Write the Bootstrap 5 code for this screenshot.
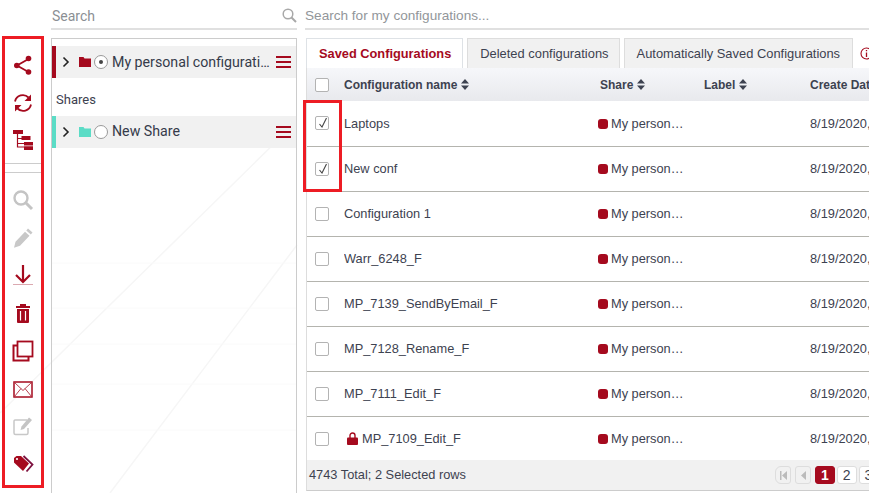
<!DOCTYPE html>
<html lang="en">
<head>
<meta charset="utf-8">
<title>Configurations</title>
<link href="https://cdn.jsdelivr.net/npm/bootstrap@5.3.0/dist/css/bootstrap.min.css" rel="stylesheet">
<style>
html,body{height:493px;overflow:hidden;background:#fff}
body{font-family:"Liberation Sans",Arial,sans-serif;font-size:12px;color:#3d4250}
.app-shell{position:relative;width:869px;height:493px;overflow:hidden;padding-left:2px}
.bg-deco{position:absolute;left:0;top:0;z-index:0;pointer-events:none}
.app-shell>*:not(.bg-deco){position:relative;z-index:1}
.app-shell>.annot-box{position:absolute;z-index:3}
.rail{width:42px;height:452px;margin-top:36px;border:3px solid #ed1c24;flex:none;padding-top:7px}
.rail-item{height:37.7px;display:flex;align-items:center;justify-content:center}
.rail-sep{height:10px;margin:4px 0 8px;border-top:1px solid #ccc;border-bottom:1px solid #ccc}
.side-col{width:246px;flex:none;margin-left:7px}
.search-line{height:30px;border-bottom:2px solid #e0e0e0;color:#8b8f94;font-family:Roboto,sans-serif;font-size:14px;line-height:32px}
.side-search{padding-left:1px}
.tree-panel{height:460px;margin-top:8px;border:1px solid #ccc;padding-top:7px;font-family:Roboto,sans-serif;font-size:14.2px}
.tree-node{height:32px;background:#f1f1f1;border-left:4px solid #a50a1e;padding-left:6px}
.tree-node.shared{border-left-color:#5bdcc6}
.folder-ic{margin-left:9px;flex:none}
.node-label{width:160px;margin-left:4px;line-height:31px;color:#353b4a;flex:none}
.shared .node-label{margin-bottom:2px}
.shares-title{height:38px;line-height:43px;padding-left:4px;font-size:13px;color:#3d4250}
.radio-dot{width:14px;height:14px;border:1px solid #9a9a9a;border-radius:50%;background:#fff;flex:none;margin-left:3px;display:flex;align-items:center;justify-content:center}
.radio-dot i{display:block;width:4px;height:4px;border-radius:50%;background:#444}
.burger{width:15px;margin-left:4px;flex:none}
.burger i{display:block;height:2.4px;background:#a50a1e;margin:2.4px 0}
.main-col{width:564px;flex:none;margin-left:8px;overflow:hidden}
.main-search{font-family:"Liberation Sans",sans-serif;font-size:13.6px;color:#92969a}
.tabs-row{margin-top:8px;height:30px;padding-left:1px;border:0;flex-wrap:nowrap;gap:4px;white-space:nowrap}
.tabs-row .nav-link{height:30px;padding:0 12px;line-height:29px;font-size:12.9px;color:#3d4250;background:#f1f1f1;border:1px solid #ddd;border-bottom:0;border-radius:0;margin:0}
.tabs-row .nav-link.active{background:#fff;color:#a50a1e;font-weight:700;font-size:12.8px;padding-right:11px}
.tabs-row .tab-short{padding-right:10px}
.info-mark{margin-left:3px;line-height:29px;align-self:center}
.grid-wrap{width:563px;height:392px;border-left:1px solid #ddd;overflow:hidden;margin-left:1px}
.conf-table{table-layout:fixed;width:660px;margin:0;font-size:12.8px;color:#3d4250}
.conf-table th,.conf-table td{padding:0;vertical-align:middle;white-space:nowrap;overflow:hidden;background:transparent;color:#3d4250;box-shadow:none}
.conf-table thead tr{height:33px;background:linear-gradient(#f6f7fa,#e8e9ed)}
.conf-table thead th{border:0;font-weight:700;font-size:12px}
.conf-table tbody tr{height:45px}
.conf-table tbody td{border-bottom:1px solid #b4b4ae}
.conf-table tbody tr:last-child td{border-bottom:0}
.conf-table .share-head{padding-left:2px}
.conf-table .cell-check{padding-left:8px}
.box-chk{display:block;width:14px;height:14px;border:1px solid #b3b3b3;border-radius:2px;background:#fff;position:relative}
.box-chk svg{position:absolute;left:1px;top:0}
.share-sq{display:inline-block;width:10px;height:10px;border-radius:3px;background:#a50a1e;margin-right:3px;vertical-align:-1px}
.sort-mark{margin-left:4px;vertical-align:-1px}
.lock-ic{margin-left:3px;margin-right:4px;vertical-align:-2px}
.grid-foot{height:31px;width:563px;margin-left:1px;background:#f1f1f1;border-left:1px solid #ddd;border-bottom:1px solid #ccc;padding-left:2px;font-size:12.8px;color:#3d4250;overflow:hidden}
.pager-list{margin:0 0 0 auto;padding:0;gap:3px;flex-wrap:nowrap;flex:none;width:94px}
.pager-list .page-item{flex:none}
.pager-list .page-link{height:18px;min-width:18px;padding:0 5px;line-height:17px;text-align:center;font-size:14px;color:#3d4250;border:1px solid #ddd;border-radius:3px;background:#fff;margin:0}
.pager-list .page-item.active .page-link{background:#a50a1e;border-color:#a50a1e;color:#fff;font-weight:700;min-width:19px}
.pager-list .page-item.disabled{margin-right:2px}
.pager-list .page-item.disabled .page-link{background:#f1f1f1;color:#bbb;display:flex;align-items:center;justify-content:center;padding:0;width:16px;min-width:16px}
.annot-box{border:3px solid #ed1c24;left:303px;top:100px;width:39px;height:92px}
</style>
</head>
<body>
<div class="app-shell d-flex align-items-start">
  <svg class="bg-deco" width="869" height="493" viewBox="0 0 869 493" aria-hidden="true">
    <g stroke="#f6f6f6" stroke-width="1.500" fill="none">
      <path d="M288 130 0 413M297 245 110 493"/>
    </g>
    <path d="M52 263H297M52 308H297M52 344H297M52 384H297M52 430H297" stroke="#fafafa" fill="none"/>
  </svg>

  <div class="rail">
    <div class="rail-item"><svg width="22" height="22" viewBox="0 0 22 22"><path d="M16.500 5 5 11.500 16.500 18" fill="none" stroke="#a50a1e" stroke-width="1.800"/><circle cx="16.500" cy="4.500" r="2.800" fill="#a50a1e"/><circle cx="4.800" cy="11.500" r="2.800" fill="#a50a1e"/><circle cx="16.500" cy="18" r="2.800" fill="#a50a1e"/></svg></div>
    <div class="rail-item"><svg width="22" height="22" viewBox="0 0 22 22"><path d="M3 9.500A8 8 0 0 1 16.500 5.500M19 12.500A8 8 0 0 1 5.500 16.500" fill="none" stroke="#a50a1e" stroke-width="1.800"/><path d="M19 2.500V9h-6.500zM3 19.500V13h6.500z" fill="#a50a1e"/></svg></div>
    <div class="rail-item"><svg width="22" height="22" viewBox="0 0 22 22"><path d="M5.500 4v14H12M5.500 9.500H10M5.500 14.500H12" fill="none" stroke="#a50a1e" stroke-width="1.200"/><path fill="#a50a1e" d="M1 1h10v4H1zM9.500 7h9v4h-9zM12 13h9v3.500h-9zM12 17.200h9V21h-9z"/></svg></div>
    <div class="rail-sep"></div>
    <div class="rail-item"><svg width="22" height="22" viewBox="0 0 22 22"><circle cx="9" cy="9" r="6.500" fill="none" stroke="#c4c4c4" stroke-width="2.400"/><path d="M13.500 13.500 20 20" stroke="#c4c4c4" stroke-width="3"/></svg></div>
    <div class="rail-item"><svg width="22" height="22" viewBox="0 0 22 22"><path fill="#c8c8c8" d="M16 1.500l4.500 4-1.700 2-4.500-4zM13 4.800l4.500 4-9.500 10-6 2 1.500-6z"/></svg></div>
    <div class="rail-item"><svg width="22" height="22" viewBox="0 0 22 22"><path d="M11 1v17M4 11 11 18l7-7" fill="none" stroke="#a50a1e" stroke-width="2.200"/><path d="M1 20.500h20" stroke="#dba9b0" stroke-width="1"/></svg></div>
    <div class="rail-item"><svg width="22" height="22" viewBox="0 0 22 22"><path fill="#a50a1e" d="M4 4h14v2H4zM8 2h6v2H8zM5 7h12v13a1 1 0 0 1-1 1H6a1 1 0 0 1-1-1z"/><path d="M8.500 9v9.500M13.500 9v9.500" stroke="#fff" stroke-width="1.200"/></svg></div>
    <div class="rail-item"><svg width="22" height="22" viewBox="0 0 22 22"><rect x="1.500" y="5.500" width="15" height="15" fill="none" stroke="#a50a1e" stroke-width="2"/><rect x="5.500" y="1.500" width="15" height="15" fill="#fff" stroke="#a50a1e" stroke-width="1.800"/></svg></div>
    <div class="rail-item"><svg width="22" height="22" viewBox="0 0 22 22"><rect x="2" y="5" width="18" height="15" fill="#fff" stroke="#a50a1e" stroke-width="1.500"/><path d="M2.500 5.500 11 13.500 19.500 5.500M2.500 19.500 9 11.500M19.500 19.500 13 11.500" fill="none" stroke="#b8404f" stroke-width="1"/></svg></div>
    <div class="rail-item"><svg width="22" height="22" viewBox="0 0 22 22"><path d="M15 5H4a1.500 1.500 0 0 0-2 1.500V18a1.500 1.500 0 0 0 1.500 1.500h11a1.500 1.500 0 0 0 1.500-1.500v-5" fill="none" stroke="#c8c8c8" stroke-width="1.500"/><path fill="#c4c4c4" d="M17 2.500l3 2.500-8 9-3.500 1 1-3.500z"/></svg></div>
    <div class="rail-item"><svg width="22" height="22" viewBox="0 0 22 22"><path d="M11.500 3 20.500 11.500 14.500 18.500" fill="none" stroke="#7d1240" stroke-width="1.800"/><path fill="#a50a1e" d="M2 5 4.500 3H9l8 7.500-6 7.500-9-8.500z"/><circle cx="5" cy="6" r="1.100" fill="#fff"/></svg></div>
  </div>

  <div class="side-col">
    <div class="search-line side-search d-flex justify-content-between">
      <span>Search</span>
      <svg class="mt-2" width="15" height="15" viewBox="0 0 15 15"><circle cx="6" cy="6" r="4.800" fill="none" stroke="#a8a8a8" stroke-width="1.500"/><path d="M9.500 9.500 14 14" stroke="#a8a8a8" stroke-width="2"/></svg>
    </div>
    <div class="tree-panel">
      <div class="tree-node d-flex align-items-center">
        <svg width="8" height="12" viewBox="0 0 8 12"><path d="M1.500 1.500 6 6l-4.500 4.500" fill="none" stroke="#222" stroke-width="1.600"/></svg>
        <svg class="folder-ic" width="12" height="10" viewBox="0 0 12 10"><path fill="#a50a1e" d="M0 0h4.500l1 1.500H12V10H0z"/></svg>
        <span class="radio-dot"><i></i></span>
        <span class="node-label text-truncate">My personal configurations</span>
        <span class="burger"><i></i><i></i><i></i></span>
      </div>
      <div class="shares-title">Shares</div>
      <div class="tree-node shared d-flex align-items-center">
        <svg width="8" height="12" viewBox="0 0 8 12"><path d="M1.500 1.500 6 6l-4.500 4.500" fill="none" stroke="#222" stroke-width="1.600"/></svg>
        <svg class="folder-ic" width="12" height="10" viewBox="0 0 12 10"><path fill="#5bdcc6" d="M0 0h4.500l1 1.500H12V10H0z"/></svg>
        <span class="radio-dot"></span>
        <span class="node-label text-truncate">New Share</span>
        <span class="burger"><i></i><i></i><i></i></span>
      </div>
    </div>
  </div>

  <div class="main-col">
    <div class="search-line main-search">Search for my configurations...</div>
    <ul class="nav nav-tabs tabs-row">
      <li class="nav-item"><a class="nav-link active" href="#">Saved Configurations</a></li>
      <li class="nav-item"><a class="nav-link tab-short" href="#">Deleted configurations</a></li>
      <li class="nav-item"><a class="nav-link" href="#">Automatically Saved Configurations</a></li>
      <li class="info-mark"><svg width="13" height="13" viewBox="0 0 13 13"><circle cx="6.500" cy="6.500" r="5.500" fill="none" stroke="#a50a1e" stroke-width="1.100"/><path d="M6.500 3v1.200M6.500 5.500V10" stroke="#a50a1e" stroke-width="1.300"/></svg></li>
    </ul>
    <div class="grid-wrap">
      <table class="table conf-table">
        <colgroup><col style="width:37px"><col style="width:254px"><col style="width:106px"><col style="width:106px"><col style="width:157px"></colgroup>
        <thead>
          <tr>
            <th class="cell-check"><span class="box-chk"></span></th>
            <th>Configuration name<svg class="sort-mark" width="8" height="11" viewBox="0 0 8 11"><path fill="#3d4250" d="M4 0l4 4.500H0zM4 11 0 6.500h8z"/></svg></th>
            <th class="share-head">Share<svg class="sort-mark" width="8" height="11" viewBox="0 0 8 11"><path fill="#3d4250" d="M4 0l4 4.500H0zM4 11 0 6.500h8z"/></svg></th>
            <th>Label<svg class="sort-mark" width="8" height="11" viewBox="0 0 8 11"><path fill="#3d4250" d="M4 0l4 4.500H0zM4 11 0 6.500h8z"/></svg></th>
            <th>Create Date</th>
          </tr>
        </thead>
        <tbody>
          <tr><td class="cell-check"><span class="box-chk"><svg width="12" height="12" viewBox="0 0 12 12"><path d="M2.500 7 5 10 9.500 1" fill="none" stroke="#444" stroke-width="1.100"/></svg></span></td><td>Laptops</td><td><span class="share-sq"></span>My person…</td><td></td><td>8/19/2020,</td></tr>
          <tr><td class="cell-check"><span class="box-chk"><svg width="12" height="12" viewBox="0 0 12 12"><path d="M2.500 7 5 10 9.500 1" fill="none" stroke="#444" stroke-width="1.100"/></svg></span></td><td>New conf</td><td><span class="share-sq"></span>My person…</td><td></td><td>8/19/2020,</td></tr>
          <tr><td class="cell-check"><span class="box-chk"></span></td><td>Configuration 1</td><td><span class="share-sq"></span>My person…</td><td></td><td>8/19/2020,</td></tr>
          <tr><td class="cell-check"><span class="box-chk"></span></td><td>Warr_6248_F</td><td><span class="share-sq"></span>My person…</td><td></td><td>8/19/2020,</td></tr>
          <tr><td class="cell-check"><span class="box-chk"></span></td><td>MP_7139_SendByEmail_F</td><td><span class="share-sq"></span>My person…</td><td></td><td>8/19/2020,</td></tr>
          <tr><td class="cell-check"><span class="box-chk"></span></td><td>MP_7128_Rename_F</td><td><span class="share-sq"></span>My person…</td><td></td><td>8/19/2020,</td></tr>
          <tr><td class="cell-check"><span class="box-chk"></span></td><td>MP_7111_Edit_F</td><td><span class="share-sq"></span>My person…</td><td></td><td>8/19/2020,</td></tr>
          <tr><td class="cell-check"><span class="box-chk"></span></td><td><svg class="lock-ic" width="11" height="13" viewBox="0 0 11 13"><path d="M3 6V3.500a2.500 2.500 0 0 1 5 0V6" fill="none" stroke="#a50a1e" stroke-width="1.400"/><rect y="5.500" width="11" height="7.500" rx="1" fill="#a50a1e"/></svg>MP_7109_Edit_F</td><td><span class="share-sq"></span>My person…</td><td></td><td>8/19/2020,</td></tr>
        </tbody>
      </table>
    </div>
    <div class="grid-foot d-flex align-items-center">
      <span>4743 Total; 2 Selected rows</span>
      <ul class="pagination pager-list">
        <li class="page-item disabled"><a class="page-link" href="#" aria-label="First"><svg width="9" height="9" viewBox="0 0 9 9"><path fill="#bbb" d="M1 0h1.500v9H1zM8 0v9L3 4.500z"/></svg></a></li>
        <li class="page-item disabled"><a class="page-link" href="#" aria-label="Previous"><svg width="7" height="9" viewBox="0 0 7 9"><path fill="#bbb" d="M6 0v9L1 4.500z"/></svg></a></li>
        <li class="page-item active"><a class="page-link" href="#">1</a></li>
        <li class="page-item"><a class="page-link" href="#">2</a></li>
        <li class="page-item"><a class="page-link" href="#">3</a></li>
      </ul>
    </div>
  </div>
  <div class="annot-box"></div>
</div>
<script src="https://cdn.jsdelivr.net/npm/bootstrap@5.3.0/dist/js/bootstrap.bundle.min.js"></script>
</body>
</html>
